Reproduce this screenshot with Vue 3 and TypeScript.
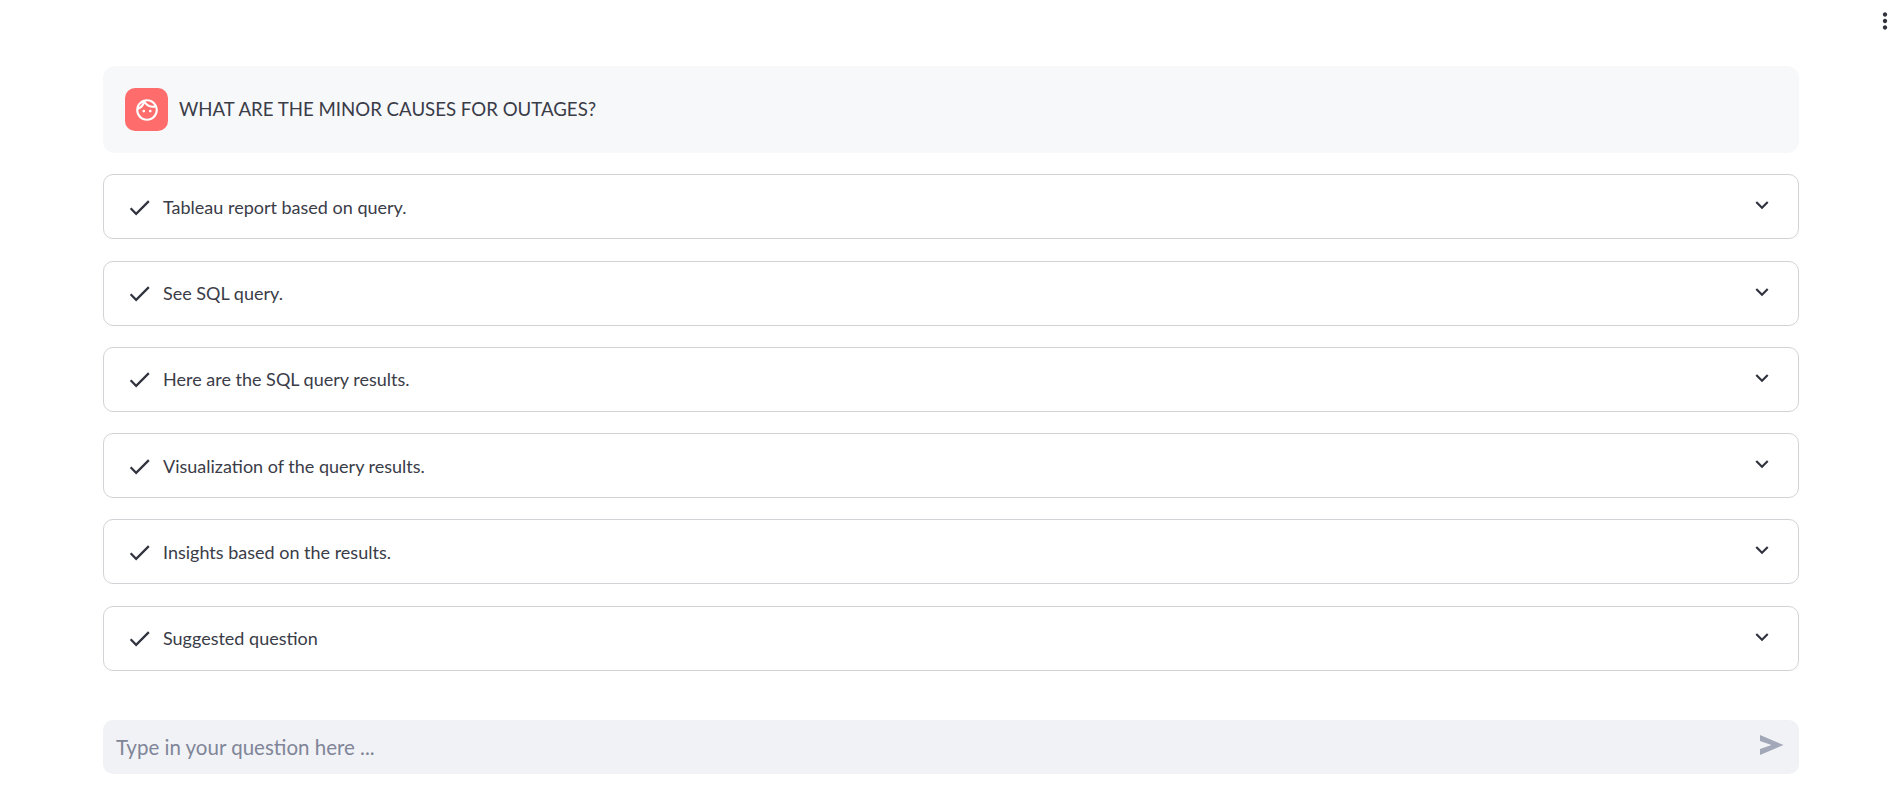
<script setup lang="ts">
const steps: string[] = [
  'Tableau report based on query.',
  'See SQL query.',
  'Here are the SQL query results.',
  'Visualization of the query results.',
  'Insights based on the results.',
  'Suggested question',
]
</script>

<template>
  <div class="page">
    <button class="menu" type="button" aria-label="Menu">
      <svg viewBox="0 0 24 24" width="26" height="26" fill="currentColor">
        <path d="M12 8c1.1 0 2-.9 2-2s-.9-2-2-2-2 .9-2 2 .9 2 2 2zm0 2c-1.1 0-2 .9-2 2s.9 2 2 2 2-.9 2-2-.9-2-2-2zm0 6c-1.1 0-2 .9-2 2s.9 2 2 2 2-.9 2-2-.9-2-2-2z" />
      </svg>
    </button>
    <main class="chat">
      <section class="message">
        <div class="avatar">
          <svg viewBox="0 0 24 24" width="26" height="26" fill="#fff">
            <path d="M10.25 13a1.25 1.25 0 1 1-2.5 0 1.25 1.25 0 0 1 2.5 0zM15 11.75a1.25 1.25 0 1 0 0 2.5 1.25 1.25 0 0 0 0-2.5zm7 .25c0 5.52-4.48 10-10 10S2 17.52 2 12 6.48 2 12 2s10 4.48 10 10zM10.66 4.12C12.06 6.44 14.6 8 17.5 8c.46 0 .91-.05 1.34-.12C17.44 5.56 14.9 4 12 4c-.46 0-.91.05-1.34.12zM4.42 9.47a8.046 8.046 0 0 0 3.66-4.44 8.046 8.046 0 0 0-3.66 4.44zM20 12c0-.78-.12-1.53-.33-2.24-.7.15-1.42.24-2.17.24a10 10 0 0 1-7.76-3.69A10.016 10.016 0 0 1 4 11.86c.01.04 0 .09 0 .14 0 4.41 3.59 8 8 8s8-3.59 8-8z" />
          </svg>
        </div>
        <p class="question">WHAT ARE THE MINOR CAUSES FOR OUTAGES?</p>
      </section>

      <div v-for="step in steps" :key="step" class="step">
        <svg class="check" viewBox="0 0 24 24" width="27" height="27" fill="currentColor">
          <path d="M9 16.17 4.83 12l-1.42 1.41L9 19 21 7l-1.41-1.41z" />
        </svg>
        <span class="label">{{ step }}</span>
        <svg class="chevron" viewBox="0 0 24 24" width="26" height="26" fill="currentColor">
          <path d="M16.59 8.59 12 13.17 7.41 8.59 6 10l6 6 6-6z" />
        </svg>
      </div>

      <form class="composer" @submit.prevent>
        <input class="field" type="text" placeholder="Type in your question here ..." />
        <button class="send" type="submit" aria-label="Send">
          <svg viewBox="0 0 24 20" width="24" height="20" fill="currentColor">
            <path d="M0 0 23.5 10 0 20V14L11.5 10 0 6Z" />
          </svg>
        </button>
      </form>
    </main>
  </div>
</template>

<style>
html,
body {
  margin: 0;
  background: #fff;
}
</style>

<style scoped>
.page {
  position: relative;
  height: 804px;
  box-sizing: border-box;
  padding: 66px 95px 0 103px;
  font-family: Lato, "Open Sans", sans-serif;
  color: #3a3c48;
  overflow: hidden;
}
.menu {
  position: absolute;
  top: 8px;
  right: -4px;
  width: 26px;
  height: 26px;
  padding: 0;
  border: 0;
  background: none;
  color: #31333f;
}
.chat {
  display: flex;
  flex-direction: column;
}
.message {
  display: flex;
  align-items: center;
  gap: 11px;
  height: 87px;
  box-sizing: border-box;
  padding-left: 22px;
  margin-bottom: 21.3px;
  background: #f7f8fa;
  border-radius: 12px;
}
.avatar {
  display: flex;
  align-items: center;
  justify-content: center;
  width: 43px;
  height: 43px;
  flex: none;
  background: #ff6c6c;
  border-radius: 10px;
}
.question {
  margin: 0;
  font-size: 18.65px;
  line-height: 1.2;
}
.step {
  display: flex;
  align-items: center;
  height: 65px;
  box-sizing: border-box;
  margin-bottom: 21.3px;
  padding: 0 23px 0 22px;
  border: 1px solid #d2d3d6;
  border-radius: 10px;
  font-size: 18px;
  background: #fff;
}
.check {
  flex: none;
  margin-top: 1px;
  color: #31333f;
}
.label {
  flex: 1;
  margin-left: 10px;
}
.chevron {
  flex: none;
  margin-top: -3px;
  color: #31333f;
}
.composer {
  display: flex;
  align-items: center;
  height: 54px;
  margin-top: 27.8px;
  padding: 0 15px 0 13px;
  background: #f0f2f6;
  border-radius: 10px;
}
.field {
  flex: 1;
  min-width: 0;
  padding: 0;
  border: 0;
  outline: 0;
  background: transparent;
  font: inherit;
  font-size: 20.5px;
  color: #31333f;
}
.field::placeholder {
  color: #808598;
  opacity: 1;
}
.send {
  display: flex;
  margin-top: -3px;
  padding: 0;
  border: 0;
  background: none;
  color: #a3a8b8;
}
</style>
